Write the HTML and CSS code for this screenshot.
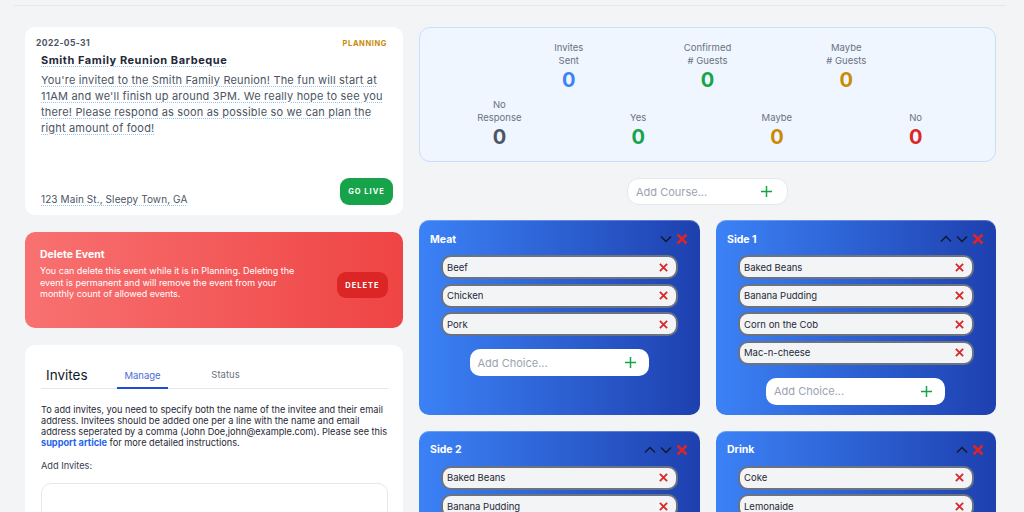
FILE: index.html
```html
<!DOCTYPE html>
<html lang="en">
<head>
<meta charset="utf-8">
<title>Event Planner</title>
<link rel="stylesheet" href="styles.css">
</head>
<body>
<div class="topbar"></div>
<main class="layout">
  <section class="left-col">
    <div class="card event-card">
      <div class="event-head">
        <span class="event-date">2022-05-31</span>
        <span class="event-status">PLANNING</span>
      </div>
      <h1 class="event-title"><span class="dotted">Smith Family Reunion Barbeque</span></h1>
      <p class="event-desc"><span class="dotted">You're invited to the Smith Family Reunion! The fun will start at 11AM and we'll finish up around 3PM. We really hope to see you there! Please respond as soon as possible so we can plan the right amount of food!</span></p>
      <div class="event-foot">
        <span class="event-address dotted">123 Main St., Sleepy Town, GA</span>
        <button class="btn btn-green">GO LIVE</button>
      </div>
    </div>

    <div class="delete-card">
      <div class="delete-text">
        <h2 class="delete-title">Delete Event</h2>
        <p class="delete-desc">You can delete this event while it is in Planning. Deleting the event is permanent and will remove the event from your monthly count of allowed events.</p>
      </div>
      <button class="btn btn-red">DELETE</button>
    </div>

    <div class="card invites-card">
      <div class="tabs">
        <span class="tabs-title">Invites</span>
        <span class="tab tab-active">Manage</span>
        <span class="tab">Status</span>
      </div>
      <p class="invites-help">To add invites, you need to specify both the name of the invitee and their email address. Invitees should be added one per a line with the name and email address seperated by a comma (John Doe,john@example.com). Please see this <a class="link">support article</a> for more detailed instructions.</p>
      <label class="invites-label">Add Invites:</label>
      <div class="textarea"></div>
    </div>
  </section>

  <section class="right-col">
    <div class="stats">
      <div class="stats-row">
        <div class="stat"><span class="stat-label">Invites<br>Sent</span><span class="stat-num c-blue">0</span></div>
        <div class="stat"><span class="stat-label">Confirmed<br># Guests</span><span class="stat-num c-green">0</span></div>
        <div class="stat"><span class="stat-label">Maybe<br># Guests</span><span class="stat-num c-yellow">0</span></div>
      </div>
      <div class="stats-row">
        <div class="stat"><span class="stat-label">No<br>Response</span><span class="stat-num c-gray">0</span></div>
        <div class="stat"><span class="stat-label">Yes</span><span class="stat-num c-green">0</span></div>
        <div class="stat"><span class="stat-label">Maybe</span><span class="stat-num c-yellow">0</span></div>
        <div class="stat"><span class="stat-label">No</span><span class="stat-num c-red">0</span></div>
      </div>
    </div>

    <div class="add-course">
      <span class="placeholder">Add Course...</span>
      <svg class="plus" viewBox="0 0 14 14"><path d="M7 1V13M1 7H13"/></svg>
    </div>

    <div class="courses">
      <div class="course">
        <div class="course-head">
          <span class="course-title">Meat</span>
          <span class="course-actions">
            <svg class="chev" viewBox="0 0 12 8"><path d="M1 1.5L6 6.5L11 1.5"/></svg>
            <svg class="xbig" viewBox="0 0 12 12"><path d="M1.5 1.5L10.5 10.5M10.5 1.5L1.5 10.5"/></svg>
          </span>
        </div>
        <div class="choices">
          <div class="choice"><span>Beef</span><svg class="xs" viewBox="0 0 10 10"><path d="M1 1L9 9M9 1L1 9"/></svg></div>
          <div class="choice"><span>Chicken</span><svg class="xs" viewBox="0 0 10 10"><path d="M1 1L9 9M9 1L1 9"/></svg></div>
          <div class="choice"><span>Pork</span><svg class="xs" viewBox="0 0 10 10"><path d="M1 1L9 9M9 1L1 9"/></svg></div>
        </div>
        <div class="add-choice"><span class="placeholder">Add Choice...</span><svg class="plus" viewBox="0 0 14 14"><path d="M7 1V13M1 7H13"/></svg></div>
      </div>

      <div class="course">
        <div class="course-head">
          <span class="course-title">Side 1</span>
          <span class="course-actions">
            <svg class="chev" viewBox="0 0 12 8"><path d="M1 6.5L6 1.5L11 6.5"/></svg>
            <svg class="chev" viewBox="0 0 12 8"><path d="M1 1.5L6 6.5L11 1.5"/></svg>
            <svg class="xbig" viewBox="0 0 12 12"><path d="M1.5 1.5L10.5 10.5M10.5 1.5L1.5 10.5"/></svg>
          </span>
        </div>
        <div class="choices">
          <div class="choice"><span>Baked Beans</span><svg class="xs" viewBox="0 0 10 10"><path d="M1 1L9 9M9 1L1 9"/></svg></div>
          <div class="choice"><span>Banana Pudding</span><svg class="xs" viewBox="0 0 10 10"><path d="M1 1L9 9M9 1L1 9"/></svg></div>
          <div class="choice"><span>Corn on the Cob</span><svg class="xs" viewBox="0 0 10 10"><path d="M1 1L9 9M9 1L1 9"/></svg></div>
          <div class="choice"><span>Mac-n-cheese</span><svg class="xs" viewBox="0 0 10 10"><path d="M1 1L9 9M9 1L1 9"/></svg></div>
        </div>
        <div class="add-choice"><span class="placeholder">Add Choice...</span><svg class="plus" viewBox="0 0 14 14"><path d="M7 1V13M1 7H13"/></svg></div>
      </div>

      <div class="course">
        <div class="course-head">
          <span class="course-title">Side 2</span>
          <span class="course-actions">
            <svg class="chev" viewBox="0 0 12 8"><path d="M1 6.5L6 1.5L11 6.5"/></svg>
            <svg class="chev" viewBox="0 0 12 8"><path d="M1 1.5L6 6.5L11 1.5"/></svg>
            <svg class="xbig" viewBox="0 0 12 12"><path d="M1.5 1.5L10.5 10.5M10.5 1.5L1.5 10.5"/></svg>
          </span>
        </div>
        <div class="choices">
          <div class="choice"><span>Baked Beans</span><svg class="xs" viewBox="0 0 10 10"><path d="M1 1L9 9M9 1L1 9"/></svg></div>
          <div class="choice"><span>Banana Pudding</span><svg class="xs" viewBox="0 0 10 10"><path d="M1 1L9 9M9 1L1 9"/></svg></div>
        </div>
      </div>

      <div class="course">
        <div class="course-head">
          <span class="course-title">Drink</span>
          <span class="course-actions">
            <svg class="chev" viewBox="0 0 12 8"><path d="M1 6.5L6 1.5L11 6.5"/></svg>
            <svg class="xbig" viewBox="0 0 12 12"><path d="M1.5 1.5L10.5 10.5M10.5 1.5L1.5 10.5"/></svg>
          </span>
        </div>
        <div class="choices">
          <div class="choice"><span>Coke</span><svg class="xs" viewBox="0 0 10 10"><path d="M1 1L9 9M9 1L1 9"/></svg></div>
          <div class="choice"><span>Lemonaide</span><svg class="xs" viewBox="0 0 10 10"><path d="M1 1L9 9M9 1L1 9"/></svg></div>
        </div>
      </div>
    </div>
  </section>
</main>
</body>
</html>
```
FILE: styles.css
```css
* { box-sizing: border-box; }
html, body { margin: 0; padding: 0; }
body {
  background: #f3f4f6;
  font-family: Inter, "Noto Sans", "Liberation Sans", sans-serif;
  color: #1f2937;
  width: 1024px;
  height: 512px;
  overflow: hidden;
}
h1, h2, p { margin: 0; }
button { font-family: inherit; border: 0; cursor: pointer; }

.topbar {
  height: 6px;
  margin: 0 18px 0 14px;
  border-bottom: 1px solid #e5e7eb;
}

.layout {
  display: grid;
  grid-template-columns: 378px 577px;
  column-gap: 16px;
  padding: 21px 0 0 25px;
  align-items: start;
}

.left-col { display: flex; flex-direction: column; gap: 17px; }
.right-col { display: flex; flex-direction: column; }

.card { background: #fff; border-radius: 10px; }

/* event card */
.event-card {
  height: 188px;
  padding: 11px 10px 10px 11px;
  display: flex;
  flex-direction: column;
}
.event-head {
  display: flex;
  justify-content: space-between;
  align-items: center;
  padding-right: 6px;
  height: 10px;
}
.event-date { font-size: 8.5px; font-weight: 700; color: #4b5563; letter-spacing: 0.4px; }
.event-status { font-size: 7.5px; font-weight: 700; color: #ca8a04; letter-spacing: 0.6px; }
.dotted {
  text-decoration: underline dotted #93c5fd;
  text-decoration-thickness: 1px;
  text-underline-offset: 2px;
}
.event-title {
  margin: 5px 0 0 5px;
  font-size: 11px;
  line-height: 14px;
  font-weight: 700;
  color: #1f2937;
  letter-spacing: 0.55px;
}
.event-desc {
  margin: 5px 0 0 5px;
  font-size: 11px;
  line-height: 16px;
  color: #4b5563;
  letter-spacing: 0.18px;
  padding-right: 0;
}
.event-foot {
  margin-top: auto;
  display: flex;
  justify-content: space-between;
  align-items: flex-end;
  padding-left: 5px;
}
.event-address { font-size: 10px; color: #4b5563; line-height: 13px; margin-bottom: -1px; letter-spacing: 0.1px; }

.btn {
  color: #fff;
  font-size: 7.5px;
  font-weight: 700;
  letter-spacing: 1px;
  border-radius: 9px;
  height: 27px;
}
.btn-green { background: #16a34a; width: 53px; }
.btn-red { background: #dc2626; width: 51px; height: 26px; margin-top: 24px; }

/* delete card */
.delete-card {
  height: 96px;
  border-radius: 10px;
  background: linear-gradient(to right, #f87171, #ef4444);
  display: flex;
  justify-content: space-between;
  align-items: flex-start;
  padding: 16px 15px 0 15px;
  color: #fff;
}
.delete-text { width: 262px; }
.delete-title { font-size: 10.5px; font-weight: 700; line-height: 14px; }
.delete-desc { margin-top: 3px; font-size: 9px; line-height: 11.5px; }

/* invites */
.invites-card { height: 200px; padding: 16px 15px 0 16px; }
.tabs {
  display: flex;
  align-items: flex-end;
  border-bottom: 1px solid #e5e7eb;
  height: 28px;
}
.tabs-title { font-size: 13.5px; color: #111827; padding: 0 0 4px 5px; width: 76px; line-height: 18px; }
.tab {
  width: 51px;
  text-align: center;
  font-size: 9.5px;
  color: #6b7280;
  line-height: 12px;
  padding-bottom: 7px;
  margin-right: 32px;
}
.tab-active { color: #4b6bd6; border-bottom: 2px solid #1d4ed8; padding-bottom: 5px; margin-bottom: -1px; }
.invites-help {
  margin-top: 15px;
  font-size: 9.2px;
  line-height: 11px;
  color: #1f2937;
}
.link { color: #2563eb; font-weight: 700; }
.invites-label { display: block; margin-top: 12px; font-size: 9.2px; line-height: 11px; color: #374151; }
.textarea {
  margin-top: 12px;
  height: 60px;
  border: 1px solid #e5e7eb;
  border-radius: 10px;
}

/* stats */
.stats {
  height: 135px;
  background: #eff6ff;
  border: 1px solid #c9defb;
  border-radius: 11px;
  padding: 13px 10px 0;
  display: flex;
  flex-direction: column;
  gap: 7px;
}
.stats-row {
  display: flex;
  justify-content: center;
  align-items: flex-end;
}
.stat {
  width: 25%;
  display: flex;
  flex-direction: column;
  align-items: center;
  text-align: center;
}
.stat-label { font-size: 9.5px; line-height: 13px; color: #6b7280; }
.stat-num { font-size: 20px; font-weight: 700; line-height: 22px; margin-top: 2px; }
.c-blue { color: #3b82f6; }
.c-green { color: #16a34a; }
.c-yellow { color: #ca8a04; }
.c-gray { color: #4b5563; }
.c-red { color: #dc2626; }

.placeholder { color: #9ca3af; font-size: 11px; }
.plus { width: 13px; height: 13px; fill: none; stroke: #16a34a; stroke-width: 1.6; }

.add-course {
  align-self: center;
  margin-top: 16px;
  width: 161px;
  height: 27px;
  background: #fff;
  border: 1px solid #e5e7eb;
  border-radius: 12px;
  display: flex;
  align-items: center;
  justify-content: space-between;
  padding: 0 14px 0 8px;
}

.courses {
  margin-top: 15px;
  display: grid;
  grid-template-columns: 281px 280px;
  column-gap: 16px;
  row-gap: 16px;
}
.course {
  border-radius: 10px;
  background: linear-gradient(to right, #3b82f6, #1e40af);
  padding: 10px 12px 10px 11px;
  box-shadow: inset 0 1px 0 rgba(255,255,255,0.25);
}
.course-head {
  display: flex;
  justify-content: space-between;
  align-items: center;
  height: 18px;
  margin-bottom: 7px;
}
.course-title { color: #fff; font-size: 10.5px; font-weight: 700; }
.course-actions { display: flex; align-items: center; gap: 4px; }
.chev { width: 12px; height: 8px; fill: none; stroke: #111827; stroke-width: 1.4; }
.xbig { width: 12px; height: 12px; fill: none; stroke: #dc2626; stroke-width: 2.5; }

.choices { display: flex; flex-direction: column; gap: 4.5px; padding: 0 10px 0 11px; }
.choice {
  height: 24px;
  background: #f3f4f6;
  border: 2px solid #6b7280;
  border-radius: 10px;
  display: flex;
  align-items: center;
  justify-content: space-between;
  padding: 0 8px 0 4px;
  font-size: 9.5px;
  color: #1f2937;
}
.xs { width: 9px; height: 9px; fill: none; stroke: #dc2626; stroke-width: 2; }

.add-choice {
  margin: 13px auto 0;
  width: 179px;
  height: 27px;
  background: #fff;
  border-radius: 10px;
  display: flex;
  align-items: center;
  justify-content: space-between;
  padding: 0 12px 0 8px;
}
```
